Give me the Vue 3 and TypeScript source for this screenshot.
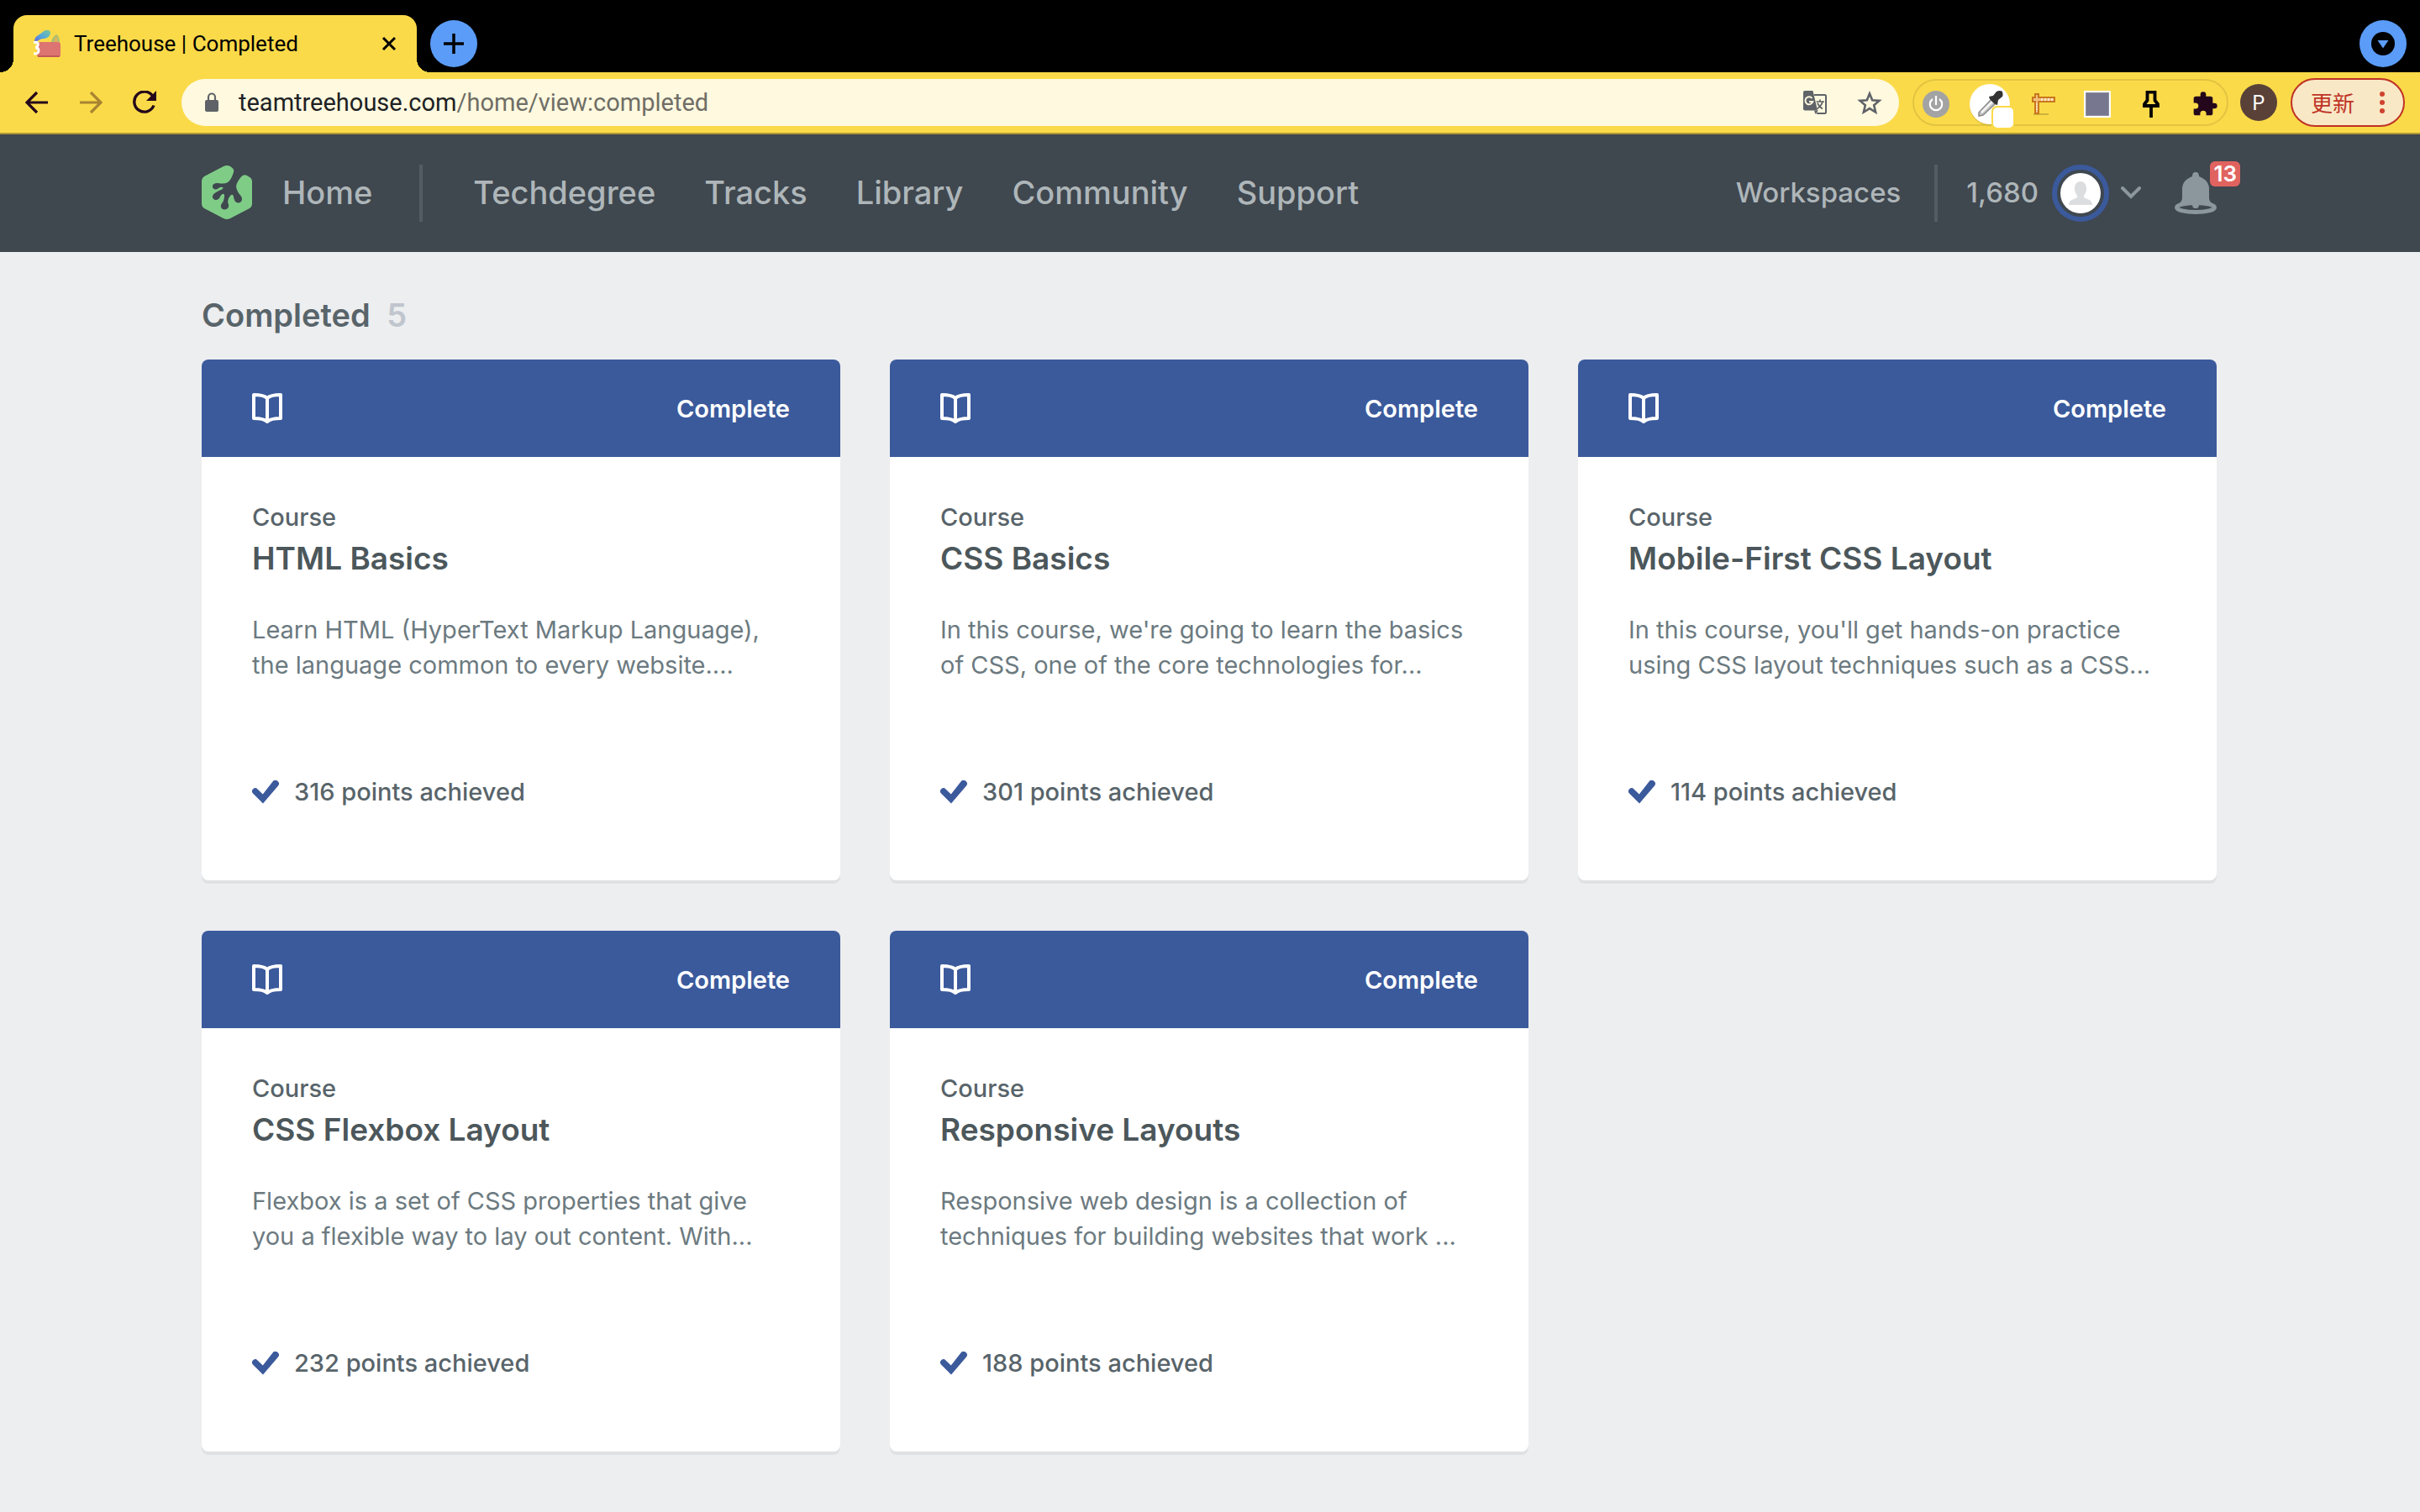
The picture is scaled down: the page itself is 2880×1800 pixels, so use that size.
<script setup lang="ts">
interface Course {
  title: string
  lines: [string, string]
  points: number
}

const navLinks: string[] = ['Techdegree', 'Tracks', 'Library', 'Community', 'Support']

const courses: Course[] = [
  {
    title: 'HTML Basics',
    lines: ['Learn HTML (HyperText Markup Language),', 'the language common to every website....'],
    points: 316,
  },
  {
    title: 'CSS Basics',
    lines: ["In this course, we're going to learn the basics", 'of CSS, one of the core technologies for...'],
    points: 301,
  },
  {
    title: 'Mobile-First CSS Layout',
    lines: ["In this course, you'll get hands-on practice", 'using CSS layout techniques such as a CSS...'],
    points: 114,
  },
  {
    title: 'CSS Flexbox Layout',
    lines: ['Flexbox is a set of CSS properties that give', 'you a flexible way to lay out content. With...'],
    points: 232,
  },
  {
    title: 'Responsive Layouts',
    lines: ['Responsive web design is a collection of', 'techniques for building websites that work ...'],
    points: 188,
  },
]
</script>

<template>
  <div class="window">
    <div class="tabstrip">
      <div class="tab">
        <svg class="favicon" width="32" height="34" viewBox="0 0 32 34" aria-hidden="true">
          <defs>
            <linearGradient id="leaf" x1="0" y1="1" x2="1" y2="0">
              <stop offset="0" stop-color="#6a5be0" />
              <stop offset=".5" stop-color="#54a9d8" />
              <stop offset="1" stop-color="#7cc59a" />
            </linearGradient>
          </defs>
          <path d="M1 13C2 7 8 6 11 3c3-3 9-3 9 1 0 4-4 7-8 7-4 0-7 2-10 5z" fill="url(#leaf)" />
          <path d="M21 15c1-5 4-8 6-9 2 0 4 5 4 9z" fill="#a9c070" />
          <path d="M24 15l3-8 2 8z" fill="#e0b45c" />
          <rect x="4" y="15" width="28" height="18" rx="3" fill="#dc7471" />
          <path d="M5 32h26" stroke="#b9504f" stroke-width="1.5" />
          <path d="M0 16c4-2 6 0 5 3-.5 2-2 2.500-3 2.500 2 0 4 1 4 4s-3 4-6 3" fill="none" stroke="#fff" stroke-width="3" />
        </svg>
        <span class="tab-title">Treehouse | Completed</span>
        <button class="bare" aria-label="Close tab">
          <svg width="18" height="18" viewBox="0 0 18 18"><path d="M2 2l14 14M16 2L2 16" stroke="#000" stroke-width="3" fill="none" /></svg>
        </button>
      </div>
      <button class="round-btn" aria-label="New tab">
        <svg width="24" height="24" viewBox="0 0 24 24"><path d="M12 0v24M0 12h24" stroke="#000" stroke-width="3.5" /></svg>
      </button>
      <button class="round-btn search-tabs" aria-label="Search tabs">
        <svg width="28" height="28" viewBox="0 0 28 28"><circle cx="14" cy="14" r="14" fill="#000" /><path d="M7.500 10h13L14 19.500z" fill="#5b9cf8" /></svg>
      </button>
    </div>

    <div class="toolbar">
      <div class="history">
        <button class="bare" aria-label="Back">
          <svg width="28" height="28" viewBox="0 0 28 28"><path d="M27 14H3M14 2L2 14l12 12" fill="none" stroke="#24071a" stroke-width="3.2" /></svg>
        </button>
        <button class="bare" aria-label="Forward">
          <svg width="28" height="28" viewBox="0 0 28 28"><path d="M1 14h24M14 2l12 12-12 12" fill="none" stroke="#a88431" stroke-width="3.2" /></svg>
        </button>
        <button class="bare" aria-label="Reload">
          <svg width="28" height="28" viewBox="0 0 28 28"><path d="M23.500 6A12 12 0 1 0 25 17.500" fill="none" stroke="#24071a" stroke-width="3.4" /><path d="M28 0v12H16z" fill="#24071a" /></svg>
        </button>
      </div>
      <div class="omnibox">
        <svg class="lock" width="16" height="24" viewBox="0 0 16 24"><path d="M4 10V5.500a4 4 0 0 1 8 0V10" fill="none" stroke="#5f6368" stroke-width="2.2" /><rect y="9" width="16" height="14" rx="2" fill="#5f6368" /></svg>
        <div class="url">teamtreehouse.com<span>/home/view:completed</span></div>
        <button class="bare" aria-label="Translate this page">
          <svg width="28" height="28" viewBox="0 0 28 28">
            <path d="M13 5h12.500q1.500 0 1.500 1.500v19q0 1.500-1.500 1.500H16" fill="none" stroke="#5f6368" stroke-width="2" />
            <path d="M2 0h9.500l5.500 23.500H2q-2 0-2-2V2q0-2 2-2z" fill="#5f6368" />
            <path d="M13 23.500h5l-3.500 4.500z" fill="#5f6368" />
            <path d="M10.500 9a4.500 4.500 0 1 0 .8 4H7" fill="none" stroke="#fff9df" stroke-width="2" />
            <path d="M15.500 13H25M20 10.500V13M23 13c-1 4-3.500 6.500-6.500 8.500M17 14.500c1 3 3.500 5.500 6 7" fill="none" stroke="#5f6368" stroke-width="1.7" />
          </svg>
        </button>
        <button class="bare" aria-label="Bookmark this page">
          <svg width="30" height="28" viewBox="0 0 30 28"><path d="M15 3.500l3.200 7.700 8.300.7-6.300 5.400 1.900 8.200-7.100-4.400-7.100 4.400 1.900-8.200-6.300-5.400 8.300-.7z" fill="none" stroke="#5f6368" stroke-width="2.6" /></svg>
        </button>
      </div>
      <div class="extensions">
        <button class="bare" aria-label="Power extension">
          <svg width="32" height="32" viewBox="0 0 32 32"><circle cx="16" cy="16" r="16" fill="#a3a3a3" /><path d="M12 10a7.200 7.200 0 1 0 8 0M16 6v11" fill="none" stroke="#fff" stroke-width="2.2" /></svg>
        </button>
        <button class="bare" aria-label="Colour picker">
          <svg width="58" height="56" viewBox="-4 -4 58 56">
            <circle cx="25" cy="25.5" r="24" fill="#c9ad35" opacity=".6" />
            <circle cx="25" cy="24" r="24" fill="#fff" />
            <path d="M12 34l15-16 5 5-15 14-5 1z" fill="#c4c4c4" stroke="#8a8a8a" stroke-width="1.5" />
            <path d="M15 34l13-13" stroke="#f5f5f5" stroke-width="2.5" />
            <path d="M24 15l5-1 4-5q4-2 7 0 1 4 0 6l-5 4-1 6-3-1-6-6z" fill="#333" />
            <rect x="27" y="26" width="28" height="28" rx="6" fill="#fbda49" />
            <rect x="29" y="28" width="24" height="24" rx="5" fill="#fff" />
          </svg>
        </button>
        <button class="bare" aria-label="Page ruler">
          <svg width="28" height="26" viewBox="0 0 28 26">
            <path d="M2 25h18" stroke="#bfa33a" stroke-width="1.5" />
            <path d="M4 1h4v4h19v5H8v14H4V10H1V5h3z" fill="#f3bf80" stroke="#c8781c" stroke-width="2" />
            <path d="M12 6v3M16 6v3M20 6v3M24 6v3M5 13h2M5 16h2M5 19h2" stroke="#fff" stroke-width="1.2" />
          </svg>
        </button>
        <button class="bare" aria-label="Window size">
          <svg width="32" height="32" viewBox="0 0 32 32"><rect width="32" height="32" fill="#fff" /><rect x="2.5" y="2.5" width="27" height="27" fill="#77778f" stroke="#8e8ea0" /></svg>
        </button>
        <button class="bare" aria-label="Pin">
          <svg width="20" height="32" viewBox="0 0 20 32"><path d="M5.500 1.500h9v10l3.500 4.500v2H2v-2l3.500-4.500z" fill="none" stroke="#000" stroke-width="3.8" /><path d="M10 18v14" stroke="#000" stroke-width="3.8" /></svg>
        </button>
        <button class="bare" aria-label="Extensions">
          <svg width="32" height="32" viewBox="0 0 24 24"><path d="M20.500 11H19V7a2 2 0 0 0-2-2h-4V3.500a2.500 2.500 0 0 0-5 0V5H4a2 2 0 0 0-2 2v3.800h1.500a2.700 2.700 0 0 1 0 5.400H2V20a2 2 0 0 0 2 2h3.800v-1.500a2.700 2.700 0 0 1 5.400 0V22H17a2 2 0 0 0 2-2v-4h1.500a2.500 2.500 0 0 0 0-5z" fill="#24071a" /></svg>
        </button>
      </div>
      <button class="profile">P</button>
      <button class="update">
        更新
        <svg width="6" height="26" viewBox="0 0 6 26"><circle cx="3" cy="3" r="3" fill="#d0412f" /><circle cx="3" cy="13" r="3" fill="#d0412f" /><circle cx="3" cy="23" r="3" fill="#d0412f" /></svg>
      </button>
    </div>

    <header class="site-header">
      <a class="home" href="#">
        <svg width="60" height="64" viewBox="0 0 60 64" aria-hidden="true">
          <path d="M26 1Q30-1 34 1L36 2.500Q39 4.500 38 8C37 11 36 14 34 17C32 20 29 21.500 25 21.500C22 21.500 20 21 17.500 21C11 21.500 12 29 17 28.500C20 28.500 20.500 25.500 24 25.800C26 26 26 27.500 24 28.500C21 30 18 31 15.500 33C11 36.500 13 41 17 41C21.500 41 21 37 24 34.500C26 33 27.500 34 27 37C26.500 42 25.500 43 23.500 46C21.500 49.500 24 52.500 27.500 52.500C32 52.500 33 48 31.500 45C30.500 42 32 38 34.500 35.500C36 34 37.500 34.500 38 37C38.500 41 40 44.500 44 44.500C48.500 44 49 39 46.500 36C43 32 41.500 29 41 25C41.500 21 44 17 47 13.500Q50 10 54 12L58 14.500Q60 16 60 19V46Q60 49 57 51L34 63Q30 65 26 63L3 51Q0 49 0 46V18Q0 15 3 13Z" fill="#7fcc87" />
        </svg>
        Home
      </a>
      <span class="divider"></span>
      <nav class="nav">
        <a v-for="link in navLinks" :key="link" href="#">{{ link }}</a>
      </nav>
      <div class="account">
        <a class="workspaces" href="#">Workspaces</a>
        <span class="divider"></span>
        <span class="score">1,680</span>
        <button class="bare avatar" aria-label="Account menu">
          <svg width="68" height="68" viewBox="0 0 68 68">
            <circle cx="34" cy="34" r="31" fill="none" stroke="#3b5a9c" stroke-width="6" />
            <circle cx="34" cy="34" r="24" fill="#fff" />
            <path d="M34 20c5 0 7 4 7 9 0 4-2 6-3 8v2c2 2 10 2 10 9H20c0-7 8-7 10-9v-2c-1-2-3-4-3-8 0-5 2-9 7-9z" fill="#dcdddf" />
          </svg>
          <svg width="24" height="16" viewBox="0 0 24 16"><path d="M2 2l10 10L22 2" fill="none" stroke="#8b979c" stroke-width="4" stroke-linecap="round" /></svg>
        </button>
        <button class="bare bell" aria-label="Notifications">
          <svg width="50" height="52" viewBox="0 0 50 52">
            <path d="M25 1c3 0 4 2 4 5 8 3 12 8 12 15v11c0 3 2 5 5 7H4c3-2 5-4 5-7V21C9 14 13 9 21 6c0-3 1-5 4-5z" fill="#8b979c" />
            <ellipse cx="25" cy="43" rx="22.5" ry="5.5" fill="#3f474f" stroke="#8b979c" stroke-width="5" />
            <path d="M21 38h8c0 5-1 6-4 6s-4-1-4-6z" fill="#8b979c" />
          </svg>
          <span class="badge">13</span>
        </button>
      </div>
    </header>

    <main class="page">
      <h1>Completed <span>5</span></h1>
      <div class="grid">
        <article v-for="course in courses" :key="course.title" class="card">
          <div class="card-head">
            <svg width="36" height="36" viewBox="0 0 36 36" aria-hidden="true">
              <path d="M18 6Q14 2 2 2v28q12 0 16 4 4-4 16-4V2Q22 2 18 6zM18 6v27" fill="none" stroke="#fff" stroke-width="4" stroke-linejoin="round" />
            </svg>
            <span>Complete</span>
          </div>
          <div class="card-body">
            <p class="kind">Course</p>
            <h2>{{ course.title }}</h2>
            <p class="summary">{{ course.lines[0] }}<br />{{ course.lines[1] }}</p>
            <p class="points">
              <svg width="32" height="28" viewBox="0 0 32 28" aria-hidden="true"><path d="M1 15.500a3.700 3.700 0 0 1 5.500-5l6.300 6L24.500 1.500a3.900 3.900 0 0 1 6.500 5L13 27.500z" fill="#3b5a9c" /></svg>
              {{ course.points }} points achieved
            </p>
          </div>
        </article>
      </div>
    </main>
  </div>
</template>

<style>
body {
  background: #edeef0;
}
</style>

<style scoped>
.window {
  font-family: Inter, "Liberation Sans", "Noto Sans CJK SC", sans-serif;
}

button {
  font-family: inherit;
  cursor: pointer;
}

a {
  color: inherit;
  text-decoration: none;
}

svg {
  display: block;
  flex: none;
}

.bare {
  display: flex;
  padding: 0;
  border: 0;
  background: none;
}

.tabstrip {
  display: flex;
  align-items: flex-end;
  height: 86px;
  background: #000;
  color: #000;
}

.tab {
  position: relative;
  display: flex;
  align-items: center;
  box-sizing: border-box;
  width: 480px;
  height: 68px;
  margin-left: 16px;
  padding: 0 24px;
  border-radius: 16px 16px 0 0;
  background: #fbda49;
}

.tab::before,
.tab::after {
  content: "";
  position: absolute;
  bottom: 0;
  width: 16px;
  height: 16px;
}

.tab::before {
  right: 100%;
  background: radial-gradient(circle at 0 0, #000 16px, #fbda49 16px);
}

.tab::after {
  left: 100%;
  background: radial-gradient(circle at 100% 0, #000 16px, #fbda49 16px);
}

.tab-title {
  flex: 1;
  margin-left: 16px;
  font-family: Roboto, sans-serif;
  font-size: 26px;
}

.round-btn {
  display: flex;
  align-items: center;
  justify-content: center;
  width: 56px;
  height: 56px;
  margin: 0 0 6px 16px;
  padding: 0;
  border: 0;
  border-radius: 50%;
  background: #5b9cf8;
}

.search-tabs {
  margin-left: auto;
  margin-right: 16px;
}

.toolbar {
  display: flex;
  align-items: center;
  height: 72px;
  padding: 0 18px 0 30px;
  border-bottom: 2px solid #af9833;
  background: #fbda49;
}

.history {
  display: flex;
  gap: 36px;
  margin-right: 30px;
}

.omnibox {
  display: flex;
  flex: 1;
  align-items: center;
  gap: 36px;
  height: 56px;
  padding: 0 20px 0 28px;
  border-radius: 28px;
  background: #fff9df;
}

.url {
  flex: 1;
  margin-left: -12px;
  color: #202124;
  font-family: Roboto, sans-serif;
  font-size: 29px;
}

.url span {
  color: #6f6e66;
}

.extensions {
  display: grid;
  grid-template-columns: repeat(6, 32px);
  align-items: center;
  column-gap: 32px;
  box-sizing: border-box;
  width: 376px;
  height: 56px;
  margin-left: 16px;
  padding: 0 10px;
  border: 2px solid #e2c442;
  border-radius: 28px;
}

.extensions .bare {
  justify-content: center;
}

.profile {
  width: 44px;
  height: 44px;
  margin-left: 14px;
  padding: 0;
  border: 0;
  border-radius: 50%;
  background: #594138;
  color: #fff;
  font-size: 24px;
}

.update {
  display: flex;
  align-items: center;
  justify-content: space-between;
  width: 136px;
  height: 58px;
  margin-left: 16px;
  padding: 0 22px;
  border: 2px solid #bf3326;
  border-radius: 29px;
  background: #f9e8c6;
  color: #bf3326;
  font-family: "Noto Sans CJK SC", sans-serif;
  font-size: 26px;
  line-height: 40px;
}

.site-header {
  display: flex;
  align-items: center;
  height: 140px;
  padding: 0 216px 0 240px;
  background: #3f474f;
  color: #aeb6b9;
  font-size: 38px;
  font-weight: 500;
}

.home,
.nav,
.workspaces,
.score {
  padding-bottom: 2px;
}

.home {
  display: flex;
  align-items: center;
  gap: 36px;
  margin-right: 56px;
}

.divider {
  width: 4px;
  height: 68px;
  background: #535b63;
}

.nav {
  display: flex;
  gap: 58px;
  margin-left: 60px;
}

.account {
  display: flex;
  align-items: center;
  margin-left: auto;
  font-size: 33px;
}

.workspaces {
  margin-right: 40px;
}

.score {
  margin: 0 16px 0 34px;
}

.avatar {
  align-items: center;
  gap: 14px;
}

.bell {
  position: relative;
  margin: 0 26px 0 40px;
}

.badge {
  position: absolute;
  right: -28px;
  top: -12px;
  padding: 0 4px;
  border-radius: 6px;
  background: #e0635f;
  color: #fff;
  font-size: 26px;
  font-weight: 600;
  line-height: 30px;
}

.page {
  padding: 0 242px 60px 240px;
}

h1,
h2,
p {
  margin: 0;
}

h1 {
  padding: 50px 0 28px;
  color: #58646a;
  font-size: 38px;
  font-weight: 600;
  line-height: 50px;
}

h1 span {
  margin-left: 10px;
  color: #c0c5cd;
}

.grid {
  display: grid;
  grid-template-columns: repeat(3, 1fr);
  gap: 60px 59px;
}

.card {
  overflow: hidden;
  border-radius: 8px;
  background: #fff;
  box-shadow: 0 4px 0 #dfe1e3;
}

.card-head {
  display: flex;
  align-items: center;
  justify-content: space-between;
  height: 116px;
  padding: 0 60px;
  background: #3b5a9c;
  color: #fff;
  font-size: 29px;
  font-weight: 600;
}

.card-body {
  padding: 51px 60px 84px;
}

.kind {
  color: #58646a;
  font-size: 29px;
  font-weight: 500;
  line-height: 42px;
}

h2 {
  color: #4c575b;
  font-size: 37px;
  font-weight: 600;
  line-height: 56px;
}

.summary {
  margin-top: 36px;
  color: #6c7a80;
  font-size: 29px;
  line-height: 42px;
  white-space: nowrap;
}

.points {
  display: flex;
  align-items: center;
  gap: 18px;
  margin-top: 109px;
  color: #58646a;
  font-size: 29px;
  font-weight: 500;
  line-height: 42px;
}
</style>
